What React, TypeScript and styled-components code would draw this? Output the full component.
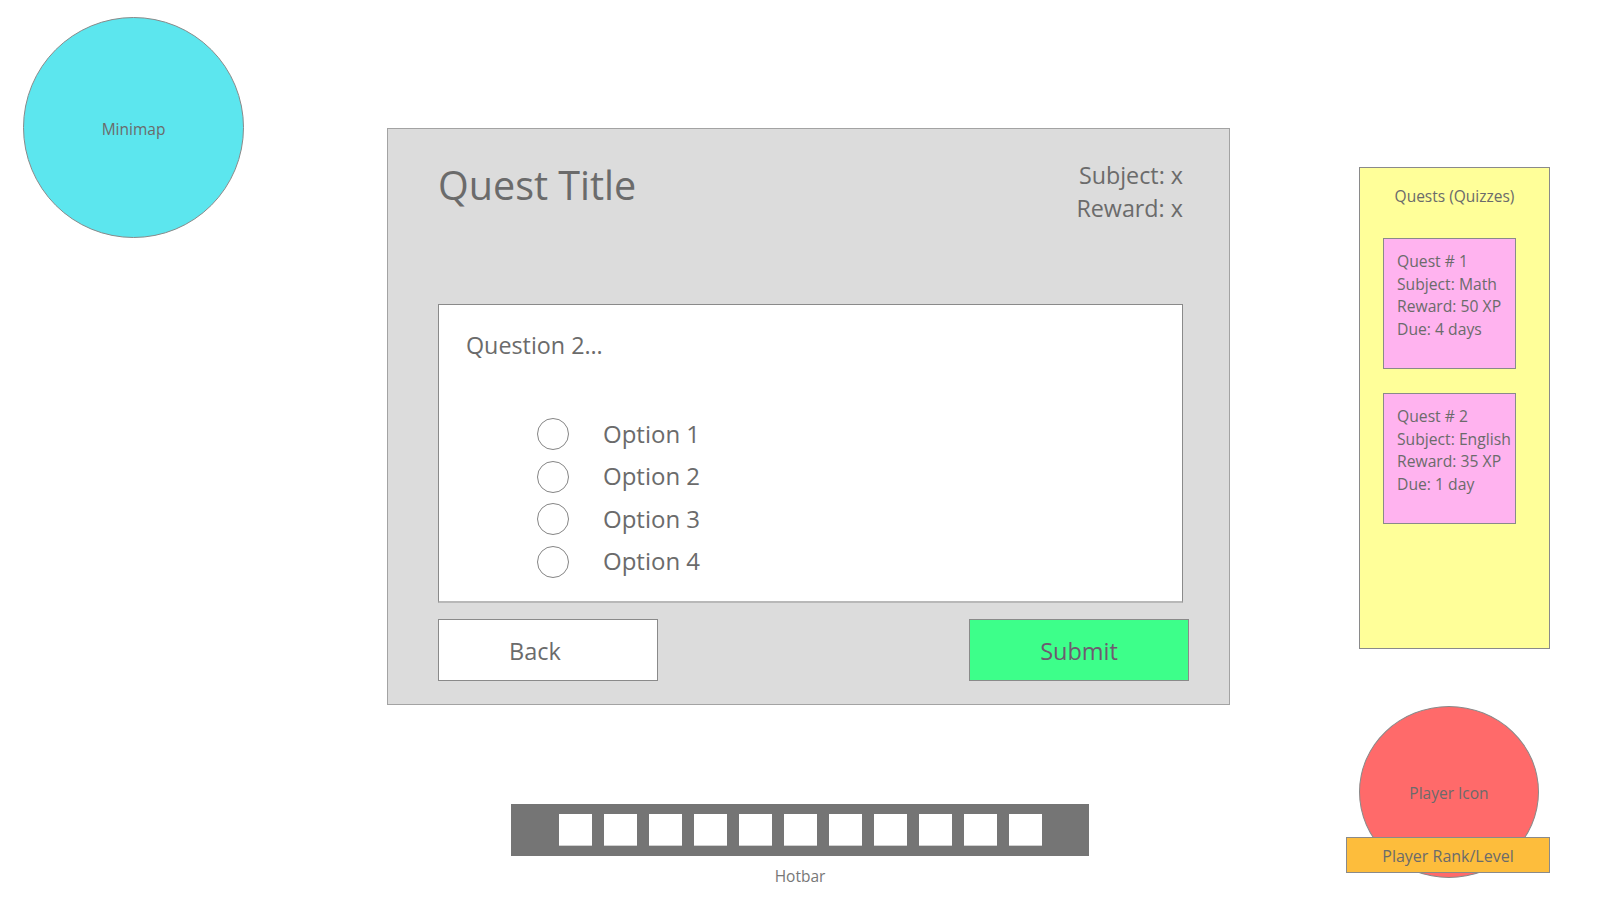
import styled, { createGlobalStyle } from 'styled-components';

const GlobalStyle = createGlobalStyle`
    html, body {
        margin: 0;
        padding: 0;
        background: #ffffff;
    }

    body {
        font-family: 'Open Sans', 'Noto Sans', 'Liberation Sans', sans-serif;
        color: #6b6b6b;
    }
`;

const TEXT = '#6b6b6b';
const LINE = '#8a8a8a';

const Screen = styled.div`
    width: 1600px;
    height: 900px;
    display: flex;
    align-items: flex-start;
    overflow: hidden;
`;

const LeftColumn = styled.div`
    width: 387px;
    padding: 17px 0 0 23px;
    box-sizing: border-box;
`;

const Minimap = styled.div`
    width: 221px;
    height: 221px;
    border-radius: 50%;
    border: 1px solid ${LINE};
    box-sizing: border-box;
    background: #5ce6ee;
    display: flex;
    align-items: center;
    justify-content: center;
    padding-top: 2px;
    font-size: 15.5px;
`;

const CenterColumn = styled.div`
    width: 843px;
    display: flex;
    flex-direction: column;
    padding-top: 128px;
`;

const QuestPanel = styled.section`
    box-sizing: border-box;
    width: 843px;
    height: 577px;
    background: #dcdcdc;
    border: 1px solid #a3a3a3;
    padding: 30px 0 0 50px;
    display: flex;
    flex-direction: column;
`;

const Header = styled.header`
    width: 745px;
    height: 145px;
    display: flex;
    justify-content: space-between;
    align-items: flex-start;
`;

const Title = styled.h1`
    margin: 7px 0 0;
    font-size: 39.5px;
    font-weight: 400;
    line-height: 1;
    color: ${TEXT};
`;

const Meta = styled.div`
    text-align: right;
    font-size: 23.3px;
    line-height: 33px;
    color: ${TEXT};
`;

const QuestionBox = styled.div`
    box-sizing: border-box;
    width: 745px;
    height: 299px;
    background: #ffffff;
    border: 1px solid ${LINE};
    border-bottom: 2px solid #b8b8b8;
    padding: 27px 0 0 27px;
`;

const Question = styled.div`
    font-size: 23.3px;
    line-height: 1.2;
`;

const Options = styled.ul`
    list-style: none;
    margin: 53px 0 0 71px;
    padding: 0;
    display: flex;
    flex-direction: column;
`;

const Option = styled.li`
    height: 42.5px;
    display: flex;
    align-items: center;
    gap: 34px;
    font-size: 24px;
    line-height: 1.2;
`;

const Radio = styled.span`
    width: 32px;
    height: 32px;
    box-sizing: border-box;
    border-radius: 50%;
    border: 1px solid #858585;
    background: #ffffff;
`;

const ButtonRow = styled.div`
    width: 751px;
    margin-top: 16px;
    display: flex;
    justify-content: space-between;
`;

const Button = styled.button<{ $primary?: boolean }>`
    box-sizing: border-box;
    width: 220px;
    height: 62px;
    border: 1px solid ${LINE};
    border-radius: 0;
    background: ${(props) => (props.$primary ? '#3dff8a' : '#ffffff')};
    color: ${(props) => (props.$primary ? '#6e5a70' : TEXT)};
    font-family: inherit;
    font-size: 23.5px;
    padding: ${(props) => (props.$primary ? '2px 0 0 0' : '2px 26px 0 0')};
    cursor: pointer;
`;

const HotbarBlock = styled.div`
    margin: 99px 0 0 124px;
    width: 578px;
    display: flex;
    flex-direction: column;
    align-items: center;
    gap: 10px;
`;

const Hotbar = styled.div`
    box-sizing: border-box;
    width: 578px;
    height: 52px;
    background: #757575;
    display: flex;
    justify-content: center;
    align-items: center;
    gap: 12px;
`;

const Slot = styled.div`
    width: 33px;
    height: 32px;
    box-sizing: border-box;
    background: #ffffff;
    border-bottom: 1px solid #d0d0d0;
`;

const Caption = styled.div`
    font-size: 15.5px;
    line-height: 20px;
    color: #777777;
`;

const RightColumn = styled.aside`
    margin-left: 116px;
    width: 204px;
    padding-top: 167px;
    display: flex;
    flex-direction: column;
`;

const QuestList = styled.div`
    box-sizing: border-box;
    margin-left: 13px;
    width: 191px;
    height: 482px;
    background: #ffff99;
    border: 1px solid ${LINE};
    padding: 18px 0 0 23px;
`;

const ListTitle = styled.div`
    margin-left: -23px;
    text-align: center;
    font-size: 15.5px;
    line-height: 20px;
`;

const Cards = styled.div`
    margin-top: 32px;
    display: flex;
    flex-direction: column;
    gap: 24px;
`;

const QuestCard = styled.div`
    box-sizing: border-box;
    width: 133px;
    height: 131px;
    background: #ffb3ef;
    border: 1px solid ${LINE};
    padding: 11px 0 0 13px;
    font-size: 15.7px;
    line-height: 22.5px;
    white-space: nowrap;
`;

const PlayerBlock = styled.div`
    position: relative;
    margin-top: 57px;
    height: 172px;
`;

const PlayerIcon = styled.div`
    box-sizing: border-box;
    margin-left: 13px;
    width: 180px;
    height: 172px;
    border-radius: 50%;
    border: 1px solid ${LINE};
    background: #ff6a6a;
    display: flex;
    align-items: center;
    justify-content: center;
    padding-top: 2px;
    font-size: 15.5px;
`;

const RankBar = styled.div`
    position: absolute;
    left: 0;
    bottom: 5px;
    box-sizing: border-box;
    width: 204px;
    height: 36px;
    background: #fdbd3c;
    border: 1px solid ${LINE};
    display: flex;
    align-items: center;
    justify-content: center;
    padding-top: 1px;
    font-size: 16px;
`;

const quests = [
    { id: 1, subject: 'Math', reward: 50, due: '4 days' },
    { id: 2, subject: 'English', reward: 35, due: '1 day' },
];

const options = ['Option 1', 'Option 2', 'Option 3', 'Option 4'];

export default function App() {
    return (
        <>
            <GlobalStyle />
            <Screen>
                <LeftColumn>
                    <Minimap>Minimap</Minimap>
                </LeftColumn>

                <CenterColumn>
                    <QuestPanel>
                        <Header>
                            <Title>Quest Title</Title>
                            <Meta>
                                <div>Subject: x</div>
                                <div>Reward: x</div>
                            </Meta>
                        </Header>
                        <QuestionBox>
                            <Question>Question 2…</Question>
                            <Options>
                                {options.map((o) => (
                                    <Option key={o}>
                                        <Radio />
                                        {o}
                                    </Option>
                                ))}
                            </Options>
                        </QuestionBox>
                        <ButtonRow>
                            <Button>Back</Button>
                            <Button $primary>Submit</Button>
                        </ButtonRow>
                    </QuestPanel>

                    <HotbarBlock>
                        <Hotbar>
                            {Array.from({ length: 11 }, (_, i) => (
                                <Slot key={i} />
                            ))}
                        </Hotbar>
                        <Caption>Hotbar</Caption>
                    </HotbarBlock>
                </CenterColumn>

                <RightColumn>
                    <QuestList>
                        <ListTitle>Quests (Quizzes)</ListTitle>
                        <Cards>
                            {quests.map((q) => (
                                <QuestCard key={q.id}>
                                    <div>Quest # {q.id}</div>
                                    <div>Subject: {q.subject}</div>
                                    <div>Reward: {q.reward} XP</div>
                                    <div>Due: {q.due}</div>
                                </QuestCard>
                            ))}
                        </Cards>
                    </QuestList>
                    <PlayerBlock>
                        <PlayerIcon>Player Icon</PlayerIcon>
                        <RankBar>Player Rank/Level</RankBar>
                    </PlayerBlock>
                </RightColumn>
            </Screen>
        </>
    );
}
